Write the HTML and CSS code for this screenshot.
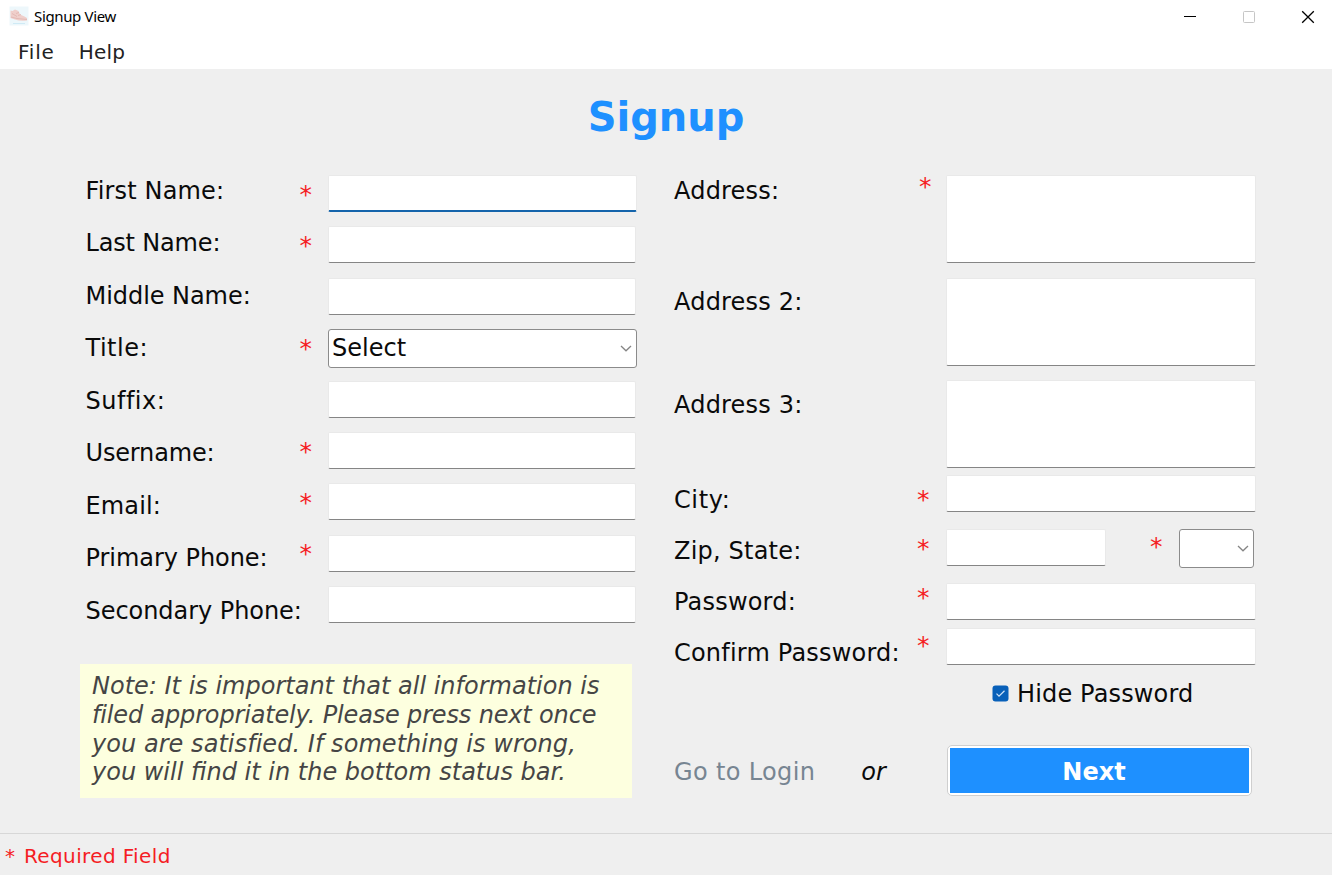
FILE: index.html
```html
<!DOCTYPE html>
<html lang="en">
<head>
<meta charset="utf-8">
<title>Signup View</title>
<link rel="stylesheet" href="styles.css">
</head>
<body>
<header class="titlebar">
  <svg class="app-icon" width="20" height="20" viewBox="0 0 20 20">
    <rect x=".5" y=".5" width="19" height="19" fill="#edf7fb"/>
    <path d="M1.500 4.500L3.500 5L6 3.500L9.500 5L11 8.500L15.500 10.500L18 12V14.500Q11 15.500 6 13.500L1.500 12Z" fill="#efcfcb"/>
    <path d="M2 11L8 12.500L18 13.500M7 7.500L10 6.500M9 9.500L12 8.500M3 7.500L8 10.500" stroke="#e0b4af" stroke-width=".8" fill="none"/>
    <path d="M4 17.500H16" stroke="#cfeaf5"/>
  </svg>
  <span class="window-title">Signup View</span>
  <div class="window-buttons">
    <svg width="14" height="14" viewBox="0 0 14 14"><path d="M1 6.500H13" stroke="#000"/></svg>
    <svg width="14" height="14" viewBox="0 0 14 14"><rect x="1.500" y="1.500" width="11" height="11" rx="1" stroke="#c6c6c6" fill="none"/></svg>
    <svg width="14" height="14" viewBox="0 0 14 14"><path d="M1.200 1.200L12.800 12.800M12.800 1.200L1.200 12.800" stroke="#000" stroke-width="1.300"/></svg>
  </div>
</header>
<nav class="menubar"><span class="menu-file">File</span><span>Help</span></nav>
<main class="content">
  <h1 class="heading">Signup</h1>
  <div class="form">
    <section class="left">
      <div class="left-form">
        <div class="labels">
          <label>First Name:</label><label class="tighter">Last Name:</label><label class="tight">Middle Name:</label><label class="loose">Title:</label><label class="loose">Suffix:</label><label class="tighter">Username:</label><label>Email:</label><label class="tight">Primary Phone:</label><label class="tight">Secondary Phone:</label>
        </div>
        <div class="stars">
          <span>*</span><span>*</span><span></span><span>*</span><span></span><span>*</span><span>*</span><span>*</span>
        </div>
        <div class="fields">
          <input class="field focused"><input class="field"><input class="field">
          <div class="select"><span>Select</span><svg width="12" height="7" viewBox="0 0 12 7"><path d="M1 1L6 5.800L11 1" stroke="#858585" stroke-width="1.300" fill="none"/></svg></div>
          <input class="field"><input class="field"><input class="field"><input class="field"><input class="field">
        </div>
      </div>
      <p class="note"><span>Note: It is important that all information is</span><span class="note-tight">filed appropriately. Please press next once</span><span class="note-loose">you are satisfied. If something is wrong,</span><span>you will find it in the bottom status bar.</span></p>
    </section>
    <section class="right">
      <div class="right-labels">
        <label class="address">Address:</label><label class="address2">Address 2:</label><label class="address3">Address 3:</label>
        <label class="loose">City:</label><label>Zip, State:</label><label>Password:</label><label>Confirm Password:</label>
        <div class="login"><a class="link">Go to Login</a><em>or</em></div>
      </div>
      <div class="right-stars">
        <span class="star-address">*</span><span>*</span><span>*</span><span>*</span><span>*</span>
      </div>
      <div class="right-fields">
        <textarea class="area"></textarea><textarea class="area"></textarea><textarea class="area last-area"></textarea>
        <input class="field city">
        <div class="zip-row"><input class="field zip"><span class="state-star">*</span><div class="select state"><svg width="12" height="7" viewBox="0 0 12 7"><path d="M1 1L6 5.800L11 1" stroke="#858585" stroke-width="1.300" fill="none"/></svg></div></div>
        <input class="field password"><input class="field">
        <div class="hide"><svg width="17" height="17" viewBox="0 0 17 17"><rect x=".5" y=".5" width="16" height="16" rx="3" fill="#0860b9"/><path d="M4.500 8.700L7 11.200L12.500 5.800" fill="none" stroke="#cfe3f7" stroke-width="1.200"/></svg><span>Hide Password</span></div>
        <button class="next"><span>Next</span></button>
      </div>
    </section>
  </div>
</main>
<footer class="status"><span>*</span><span class="status-text">Required Field</span></footer>
</body>
</html>
```
FILE: styles.css
```css
* { box-sizing: border-box; }
body {
  margin: 0;
  width: 1332px;
  height: 875px;
  overflow: hidden;
  display: flex;
  flex-direction: column;
  background: #efefef;
  color: #0a0a0a;
  font: 24px "DejaVu Sans", sans-serif;
}
svg { display: block; flex: none; }
.titlebar {
  height: 34px;
  background: #fff;
  display: flex;
  align-items: center;
  padding: 0 17px 0 9px;
}
.app-icon { margin-bottom: 2px; }
.window-title {
  margin: 0 0 2px 5px;
  font: 15px "Noto Sans", sans-serif;
  letter-spacing: -.35px;
  color: #000;
}
.window-buttons { display: flex; gap: 45px; margin-left: auto; }
.menubar {
  height: 35px;
  background: #fff;
  display: flex;
  gap: 24px;
  padding-left: 18px;
  font-size: 20px;
  line-height: 37px;
  letter-spacing: .2px;
  color: #222;
}
.menu-file { letter-spacing: .8px; }
.content { height: 764px; }
.heading {
  margin: 0;
  height: 95px;
  line-height: 97px;
  text-align: center;
  color: #1e90ff;
  font-size: 40px;
}
.form { display: flex; }
.left { width: 552px; margin-left: 80px; }
.left-form { display: flex; height: 500px; padding-left: 5.5px; }
.labels { width: 214px; padding-top: .6px; }
.labels label { display: block; height: 52.5px; line-height: 52.5px; }
label { white-space: nowrap; letter-spacing: .15px; }
.labels .tight { letter-spacing: -.05px; }
.labels .tighter { letter-spacing: -.17px; }
label.loose { letter-spacing: .5px; }
.stars { width: 28.5px; padding-top: 4.6px; }
.stars span, .right-stars span { display: block; height: 51.4px; line-height: 51.4px; }
.stars span, .right-stars span, .state-star { color: #f51d24; font-size: 25px; }
.fields { padding-top: 11px; display: flex; flex-direction: column; gap: 14.4px; }
.labels, .stars, .fields { flex: none; }
.field, .area {
  display: block;
  width: 308px;
  height: 37px;
  margin: 0;
  padding: 0 4px;
  border: 1px solid #e9e9e9;
  border-bottom: 1px solid #858585;
  border-radius: 2px;
  background: #fff;
  font: inherit;
  outline: none;
  resize: none;
  flex: none;
}
.field.focused { width: 309px; border-bottom: 2px solid #1464ab; }
.select {
  width: 309px;
  height: 39px;
  margin-bottom: -2px;
  border: 1px solid #8b8b8b;
  border-radius: 3px;
  background: #fff;
  display: flex;
  align-items: center;
  justify-content: space-between;
  padding: 0 4px 0 3px;
  line-height: 35px;
  flex: none;
}
.note {
  margin: 0;
  height: 134px;
  padding: 8px 12px;
  background: #fdffdf;
  color: #454545;
  font-style: italic;
  line-height: 28.8px;
  white-space: nowrap;
}
.note span { display: block; }
.note-tight { letter-spacing: -.16px; }
.note-loose { letter-spacing: .05px; }
.right { display: flex; margin-left: 42px; }
.right-labels { width: 243px; padding-top: .7px; }
.right-labels label { display: block; height: 51.2px; line-height: 51.2px; letter-spacing: .2px; }
.right-labels .loose { letter-spacing: .6px; }
.right-labels .address { height: 112px; line-height: 52.3px; }
.right-labels .address2 { height: 103.5px; }
.right-labels .address3 { height: 94.5px; }
.login { display: flex; gap: 46px; line-height: 52px; padding-top: 67px; }
.link { color: #778592; letter-spacing: .35px; }
.right-stars { width: 29px; }
.right-stars span { height: 48.8px; line-height: 48.8px; }
.right-stars .star-address { height: 312px; line-height: 46px; padding-left: 2px; }
.right-fields { width: 310px; padding-top: 11px; }
.area { width: 310px; height: 88px; margin-bottom: 14.5px; }
.last-area { margin-bottom: 7px; }
.right-fields .field { width: 310px; }
.zip-row { display: flex; margin: 17px 0 16px; height: 38px; }
.right-fields .zip { width: 160px; }
.state-star { width: 73px; padding-left: 44px; line-height: 36px; }
.state { width: 75px; justify-content: flex-end; }
.password { margin-bottom: 8px; }
.hide { display: flex; align-items: center; gap: 8px; height: 57px; padding: 1px 0 0 46px; letter-spacing: .15px; }
.hide svg { margin-bottom: 2px; }
.next {
  display: block;
  width: 305px;
  height: 51px;
  margin: 23px 0 0 1px;
  padding: 2px;
  border: 1px solid #cfcfcf;
  border-radius: 5px;
  background: #fff;
  color: #fff;
  font: bold 24px "DejaVu Sans", sans-serif;
}
.next span { display: block; height: 45px; padding-right: 11px; line-height: 48px; background: #1e90ff; }
.status {
  height: 42px;
  border-top: 1px solid #d7d7d7;
  display: flex;
  gap: 9px;
  padding-left: 5px;
  line-height: 45px;
  font-size: 20px;
  color: #f51d24;
}
.status-text { letter-spacing: .37px; }
```
